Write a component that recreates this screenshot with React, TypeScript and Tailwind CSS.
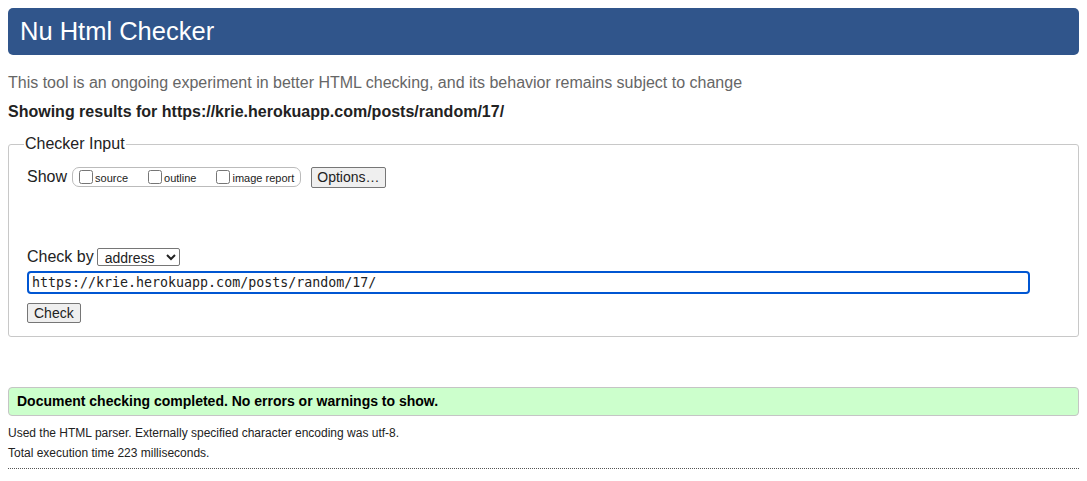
import React from 'react';

export default function App() {
  return (
    <div className="min-h-screen bg-white p-2 font-['Liberation_Sans',Arial,sans-serif] text-[#222]">
      <h1 className="h-[47px] rounded-[5px] bg-[#30558b] pl-3 pt-[8px] text-[25.5px] leading-[30px] text-white">
        Nu Html Checker
      </h1>

      <p className="mt-[18px] text-[16px] leading-[20px] text-[#666]">
        This tool is an ongoing experiment in better HTML checking, and its behavior remains subject to change
      </p>
      <p className="mt-[9px] text-[16px] font-bold leading-[20px] text-[#222]">
        Showing results for https://krie.herokuapp.com/posts/random/17/
      </p>

      <fieldset className="mt-[13px] h-[202px] rounded-[3px] border border-[#c8c8c8] px-[18px]">
        <legend className="ml-[-3px] px-[1px] text-[16px] leading-[18px] text-[#222]">Checker Input</legend>

        <div className="mt-[12px] flex items-center">
          <span className="text-[16px]">Show</span>
          <div className="ml-[5px] flex h-[20px] items-center rounded-[7px] border border-[#bbb] pl-[6px] pr-[6px] text-[11px]">
            <label className="flex items-end">
              <input type="checkbox" className="m-0 mr-[2px] h-[14px] w-[14px]" />
              <span className="leading-[12px]">source</span>
            </label>
            <label className="ml-[20px] flex items-end">
              <input type="checkbox" className="m-0 mr-[2px] h-[14px] w-[14px]" />
              <span className="leading-[12px]">outline</span>
            </label>
            <label className="ml-[20px] flex items-end">
              <input type="checkbox" className="m-0 mr-[2px] h-[14px] w-[14px]" />
              <span className="leading-[12px]">image report</span>
            </label>
          </div>
          <button className="ml-[10px] h-[21px] rounded-[2px] border border-[#767676] bg-[#efefef] px-[5px] text-[14px] leading-[18px]">
            Options…
          </button>
        </div>

        <div className="mt-[56px] flex items-center">
          <span className="text-[16px]">Check by</span>
          <select className="ml-[3px] h-[18px] w-[83px] rounded-[2px] border border-[#767676] bg-white px-[3px] text-[14px] leading-[16px]" defaultValue="address">
            <option value="address">address</option>
          </select>
        </div>

        <input
          type="text"
          readOnly
          value="https://krie.herokuapp.com/posts/random/17/"
          className="mt-[2px] block h-[23px] w-[1003px] rounded-[4px] border-2 border-[#0056d2] px-[3px] font-['DejaVu_Sans_Mono',monospace] text-[13.3px] outline-none"
        />

        <button className="mt-[9px] h-[20px] rounded-[2px] border border-[#767676] bg-[#efefef] px-[6px] text-[14px] leading-[18px]">
          Check
        </button>
      </fieldset>

      <div className="mt-[50px] h-[29px] rounded-[4px] border border-[#c5c5c5] bg-[#ccffcc] pl-[8px] text-[14px] font-bold leading-[27px] text-black">
        Document checking completed. No errors or warnings to show.
      </div>

      <p className="mt-[10px] text-[12px] leading-[14px] text-[#222]">
        Used the HTML parser. Externally specified character encoding was utf-8.
      </p>
      <p className="mt-[6px] text-[12px] leading-[14px] text-[#222]">Total execution time 223 milliseconds.</p>
      <div className="mt-[8px] border-b border-dotted border-[#555]" />
    </div>
  );
}
